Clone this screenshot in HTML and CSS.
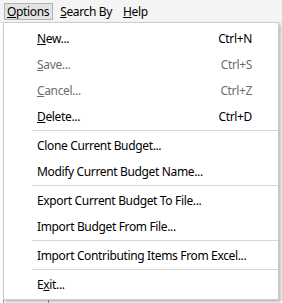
FILE: index.html
```html
<!DOCTYPE html>
<html>
  <head>
    <meta name="viewport" content="width=device-width, initial-scale=1.0" />
    <link rel="stylesheet" href="styles.css">
  </head>
  <body>
    <div class="menubar">
      <div class="bar-item open"><u>O</u>ptions</div>
      <div class="bar-item"><u>S</u>earch By</div>
      <div class="bar-item"><u>H</u>elp</div>
    </div>
    <div class="workspace">
      <div class="grid-line"></div>
    </div>

    <!-- dropdown of the Options menu -->
    <div class="dropdown">
      <div class="menu-item"><span><u>N</u>ew...</span><span class="key">Ctrl+N</span></div>
      <div class="menu-item disabled"><span><u>S</u>ave...</span><span class="key">Ctrl+S</span></div>
      <div class="menu-item disabled"><span><u>C</u>ancel...</span><span class="key">Ctrl+Z</span></div>
      <div class="menu-item"><span><u>D</u>elete...</span><span class="key">Ctrl+D</span></div>
      <div class="separator"></div>
      <div class="menu-item"><span>Clone Current Budget...</span></div>
      <div class="menu-item"><span>Modify Current Budget Name...</span></div>
      <div class="separator"></div>
      <div class="menu-item"><span>Export Current Budget To File...</span></div>
      <div class="menu-item"><span>Import Budget From File...</span></div>
      <div class="separator"></div>
      <div class="menu-item"><span>Import Contributing Items From Excel...</span></div>
      <div class="separator"></div>
      <div class="menu-item"><span>E<u>x</u>it...</span></div>
    </div>
  </body>
</html>
```

FILE: styles.css
```css
* {
  box-sizing: border-box;
}
body {
  margin: 0;
  font-family: "Noto Sans", "Open Sans", sans-serif;
  font-size: 12px;
  letter-spacing: -0.35px;
  color: #000;
  background: #fff;
  height: 303px;
  overflow: hidden;
}

/*top menu strip*/
.menubar {
  display: flex;
  gap: 4px;
  height: 22px;
  padding: 3px 0 0 4px;
  background: #f4f4f4;
}
.bar-item {
  height: 17px;
  line-height: 15px;
  padding: 0 3px 0 2px;
  border: 1px solid transparent;
}
.bar-item.open {
  background: #e3e3e3;
  border-color: #b4b4b4;
}

/*what lies under the open menu*/
.workspace {
  height: 281px;
  position: relative;
  border-top: 1px solid #e6e6e6;
}
.grid-line {
  position: absolute;
  bottom: 0;
  left: 3px;
  width: 46px;
  height: 5px;
  border-left: 1px solid #9a9a9a;
  border-right: 1px solid #9a9a9a;
  border-top: 1px solid #d0d0d0;
}

/*the open dropdown*/
.dropdown {
  position: absolute;
  left: 3px;
  top: 22px;
  width: 276px;
  padding: 2px 0;
  background: #fff;
  border: 1px solid #cccccc;
  box-shadow: 2px 2px 3px rgba(0, 0, 0, 0.28);
  z-index: 10;
}
.menu-item {
  display: flex;
  justify-content: space-between;
  align-items: center;
  height: 26px;
  padding: 0 26px 0 33px;
  white-space: nowrap;
}
.menu-item.disabled {
  color: #6d6d6d;
}
.separator {
  height: 2px;
  margin-top: 1px;
  margin-left: 28px;
  border-top: 1px solid #d7d7d7;
}
```
